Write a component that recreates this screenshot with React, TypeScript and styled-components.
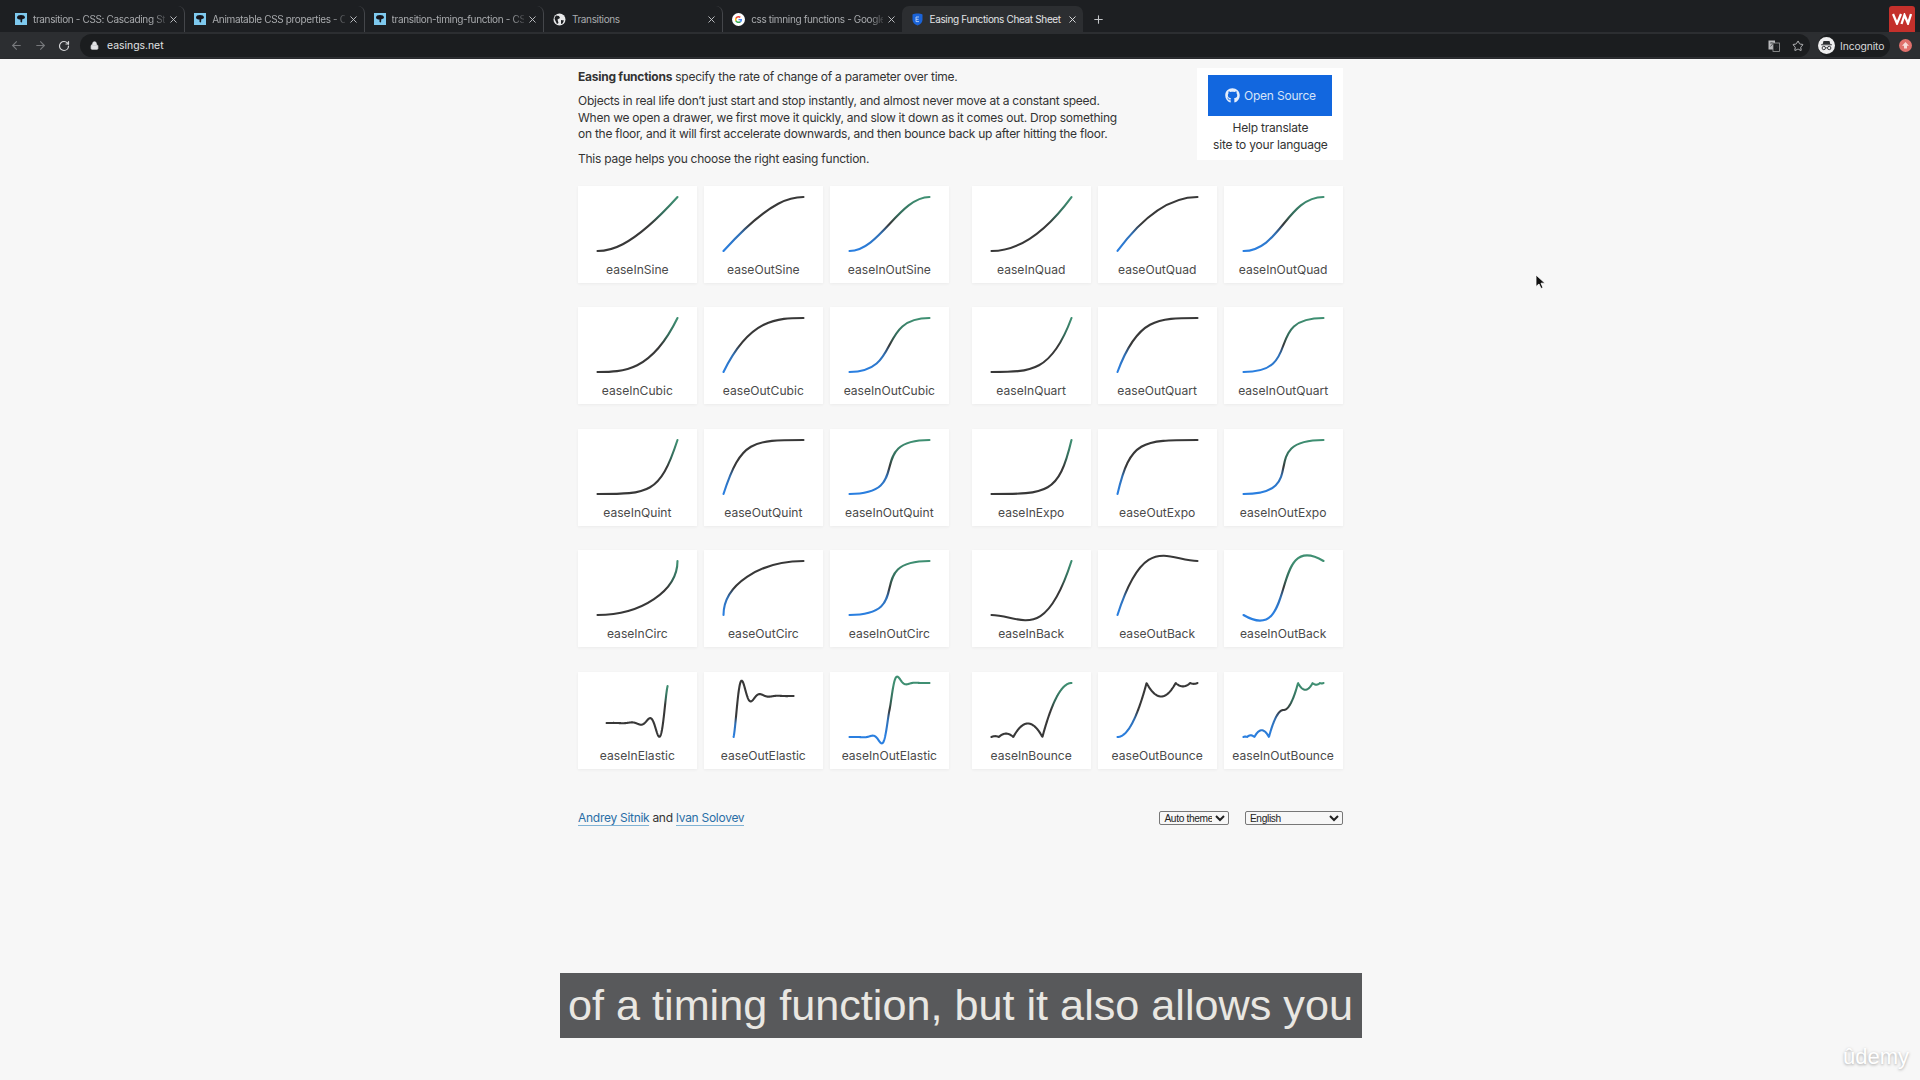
import styled, { createGlobalStyle } from 'styled-components';
import { ArrowLeft, ArrowRight, RotateCw, Lock, Star, Plus, X } from 'lucide-react';
import { FaGithub } from 'react-icons/fa';

const GlobalStyle = createGlobalStyle`
  html, body { margin: 0; padding: 0; height: 100%; background: #f7f7f7; }
  #root { height: 100%; }
  * { box-sizing: border-box; }
`;

const Screen = styled.div`
  position: relative;
  width: 1920px;
  height: 1080px;
  overflow: hidden;
  display: flex;
  flex-direction: column;
  font-family: Inter, 'Liberation Sans', sans-serif;
  background: #f7f7f7;
`;

const TabStrip = styled.div`
  height: 32px;
  flex-shrink: 0;
  display: flex;
  align-items: flex-end;
  padding-left: 6px;
  background: #1d1f22;
`;

const Tab = styled.div<{ $active?: boolean; $last?: boolean }>`
  width: ${(p) => (p.$active ? '181px' : '179.3px')};
  height: 26px;
  display: flex;
  align-items: center;
  gap: 6px;
  padding: 0 5px 0 ${(p) => (p.$active ? '10px' : '9px')};
  font-size: 10px;
  letter-spacing: -0.35px;
  white-space: nowrap;
  border-radius: 7px 7px 0 0;
  color: ${(p) => (p.$active ? '#e3e4e6' : '#a9abae')};
  background: ${(p) => (p.$active ? '#2c2e31' : 'transparent')};
  border-right: ${(p) => (p.$active || p.$last ? 'none' : '1px solid #44464a')};
  background-clip: padding-box;
  & > svg {
    flex-shrink: 0;
  }
`;

const TabTitle = styled.span<{ $fade?: boolean }>`
  flex: 1;
  min-width: 0;
  margin-right: -3px;
  ${(p) =>
    p.$fade
      ? `-webkit-mask-image: linear-gradient(90deg, #000 90%, rgba(0,0,0,0.25));
         mask-image: linear-gradient(90deg, #000 90%, rgba(0,0,0,0.25));`
      : ''}
`;

const NewTab = styled.div`
  display: flex;
  align-items: center;
  height: 26px;
  margin-left: 9px;
  color: #c4c6c9;
`;

const Brand = styled.div`
  margin-left: auto;
  margin-right: 5px;
  width: 26px;
  height: 26px;
  align-self: flex-end;
  border-radius: 3px 3px 0 0;
  background: #c4302b;
  display: flex;
  align-items: center;
  justify-content: center;
`;

const Toolbar = styled.div`
  height: 27px;
  flex-shrink: 0;
  display: flex;
  align-items: center;
  padding: 1px 0 0 4px;
  background: #2c2e31;
  border-bottom: 1px solid #2a2b2e;
`;

const NavButton = styled.div<{ $dim?: boolean }>`
  width: 24px;
  display: flex;
  justify-content: center;
  color: ${(p) => (p.$dim ? '#77797c' : '#d6d7d9')};
`;

const Omnibox = styled.div`
  margin-left: 4px;
  width: 1730px;
  height: 23px;
  border-radius: 12px;
  display: flex;
  align-items: center;
  padding-left: 10px;
  background: #1b1d1f;
  color: #e2e3e5;
  font-size: 10.4px;
`;

const Address = styled.span`
  margin-left: 8px;
  flex: 1;
`;

const OmniIcon = styled.div`
  display: flex;
  width: 24px;
  justify-content: center;
  color: #b9babc;
`;

const Profile = styled.div`
  margin-left: 8px;
  width: 72px;
  height: 23px;
  border-radius: 12px;
  display: flex;
  align-items: center;
  gap: 5px;
  background: #1b1d1f;
  color: #d8d9db;
  font-size: 10.3px;
  letter-spacing: -0.1px;
`;

const ExtensionDot = styled.div`
  margin-left: 9px;
  display: flex;
`;

const Main = styled.main`
  width: 765.4px;
  margin-left: 578px;
  flex: 1;
  display: flex;
  flex-direction: column;
`;

const Intro = styled.section`
  display: flex;
  justify-content: space-between;
  align-items: flex-start;
  padding-top: 8.5px;
`;

const IntroText = styled.div`
  font-size: 12px;
  letter-spacing: -0.25px;
  line-height: 16.5px;
  color: #333;
  padding-top: 1px;
`;

const Paragraph = styled.p`
  margin: 0 0 8.3px;
  white-space: nowrap;
`;

const SourceCard = styled.aside`
  width: 146px;
  height: 92px;
  padding-top: 7.5px;
  background: #fff;
  display: flex;
  flex-direction: column;
  align-items: center;
  font-size: 12px;
  letter-spacing: -0.2px;
  line-height: 16.5px;
  color: #333;
  text-align: center;
`;

const SourceButton = styled.a`
  width: 124px;
  height: 40.5px;
  margin-bottom: 4.5px;
  padding-top: 1px;
  background: #1267df;
  color: #d5e3f8;
  display: flex;
  align-items: center;
  justify-content: center;
  gap: 4px;
  font-size: 12px;
`;

const Grid = styled.section`
  margin-top: 10px;
  display: grid;
  grid-template-columns: repeat(3, 118.7px) 8.6px repeat(3, 118.7px);
  column-gap: 7.3px;
  row-gap: 24.5px;
`;

const Card = styled.div`
  height: 97px;
  background: #fff;
  box-shadow: 0 1px 3px rgba(0, 0, 0, 0.05);
  display: flex;
  flex-direction: column;
  align-items: center;
  &:nth-child(6n + 4) {
    grid-column: 5;
  }
`;

const CurveBox = styled.svg`
  display: block;
  flex-shrink: 0;
  width: 100%;
  height: 76px;
`;

const CardLabel = styled.div`
  font-size: 12.1px;
  line-height: 16px;
  color: #4a4a4a;
`;

const Footer = styled.footer`
  margin-top: 41px;
  display: flex;
  align-items: baseline;
  font-size: 12px;
  letter-spacing: -0.28px;
  color: #333;
`;

const Author = styled.a`
  color: #2a6ea6;
  border-bottom: 1px solid #7fb2d4;
  line-height: 14px;
`;

const Joiner = styled.span`
  margin: 0 3px;
`;

const Picker = styled.select<{ $w: number }>`
  align-self: center;
  width: ${(p) => p.$w}px;
  height: 14.5px;
  padding: 0;
  font-family: 'Liberation Sans', sans-serif;
  font-size: 10.2px;
  letter-spacing: -0.35px;
  color: #222;
  background: #f7f7f7;
  border: 1px solid #777;
  border-radius: 2px;
  margin-left: 15.5px;
  &:first-of-type {
    margin-left: auto;
  }
`;

const Caption = styled.div`
  position: absolute;
  left: 559.5px;
  top: 973px;
  width: 802px;
  height: 65px;
  display: flex;
  align-items: center;
  justify-content: center;
  background: #58595b;
  color: #e9e7e2;
  font-family: 'Liberation Sans', sans-serif;
  font-size: 43.2px;
  white-space: nowrap;
`;

const Watermark = styled.div`
  position: absolute;
  left: 1843px;
  top: 1044px;
  color: #fff;
  font-family: 'Liberation Sans', sans-serif;
  font-size: 22px;
  text-shadow: 0 1px 3px rgba(0, 0, 0, 0.35);
`;

const Pointer = styled.svg`
  position: absolute;
  left: 1535px;
  top: 274px;
`;

// the site draws most previews straight from their cubic-bezier values
const BEZIERS: Record<string, [number, number, number, number]> = {
  easeInSine: [0.12, 0, 0.39, 0],
  easeOutSine: [0.61, 1, 0.88, 1],
  easeInOutSine: [0.37, 0, 0.63, 1],
  easeInQuad: [0.11, 0, 0.5, 0],
  easeOutQuad: [0.5, 1, 0.89, 1],
  easeInOutQuad: [0.45, 0, 0.55, 1],
  easeInCubic: [0.32, 0, 0.67, 0],
  easeOutCubic: [0.33, 1, 0.68, 1],
  easeInOutCubic: [0.65, 0, 0.35, 1],
  easeInQuart: [0.5, 0, 0.75, 0],
  easeOutQuart: [0.25, 1, 0.5, 1],
  easeInOutQuart: [0.76, 0, 0.24, 1],
  easeInQuint: [0.64, 0, 0.78, 0],
  easeOutQuint: [0.22, 1, 0.36, 1],
  easeInOutQuint: [0.83, 0, 0.17, 1],
  easeInExpo: [0.7, 0, 0.84, 0],
  easeOutExpo: [0.16, 1, 0.3, 1],
  easeInOutExpo: [0.87, 0, 0.13, 1],
  easeInCirc: [0.55, 0, 1, 0.45],
  easeOutCirc: [0, 0.55, 0.45, 1],
  easeInOutCirc: [0.85, 0, 0.15, 1],
  easeInBack: [0.36, 0, 0.66, -0.56],
  easeOutBack: [0.34, 1.56, 0.64, 1],
  easeInOutBack: [0.68, -0.6, 0.32, 1.6],
};

type Ease = (x: number) => number;
const c4 = (2 * Math.PI) / 3;
const c5 = (2 * Math.PI) / 4.5;

const outBounce: Ease = (x) => {
  const n = 7.5625;
  const d = 2.75;
  if (x < 1 / d) return n * x * x;
  if (x < 2 / d) return n * (x -= 1.5 / d) * x + 0.75;
  if (x < 2.5 / d) return n * (x -= 2.25 / d) * x + 0.9375;
  return n * (x -= 2.625 / d) * x + 0.984375;
};

const SAMPLED: Record<string, Ease> = {
  easeInElastic: (x) =>
    x === 0 ? 0 : x === 1 ? 1 : -Math.pow(2, 10 * x - 10) * Math.sin((x * 10 - 10.75) * c4),
  easeOutElastic: (x) =>
    x === 0 ? 0 : x === 1 ? 1 : Math.pow(2, -10 * x) * Math.sin((x * 10 - 0.75) * c4) + 1,
  easeInOutElastic: (x) =>
    x === 0
      ? 0
      : x === 1
        ? 1
        : x < 0.5
          ? -(Math.pow(2, 20 * x - 10) * Math.sin((20 * x - 11.125) * c5)) / 2
          : (Math.pow(2, -20 * x + 10) * Math.sin((20 * x - 11.125) * c5)) / 2 + 1,
  easeInBounce: (x) => 1 - outBounce(1 - x),
  easeOutBounce: outBounce,
  easeInOutBounce: (x) =>
    x < 0.5 ? (1 - outBounce(1 - 2 * x)) / 2 : (1 + outBounce(2 * x - 1)) / 2,
};

const NAMES = [...Object.keys(BEZIERS), ...Object.keys(SAMPLED)];

// elastic previews are drawn smaller on the site
const BOXES: Record<string, { x0: number; x1: number; y0: number; y1: number }> = {
  easeInElastic: { x0: 28.6, x1: 89.6, y0: 51, y1: 14 },
  easeOutElastic: { x0: 29.6, x1: 89.6, y0: 65, y1: 24 },
};
const DEFAULT_BOX = { x0: 19.5, x1: 99.5, y0: 65, y1: 11 };

function curvePath(name: string) {
  const box = BOXES[name] ?? DEFAULT_BOX;
  const px = (t: number) => (box.x0 + t * (box.x1 - box.x0)).toFixed(2);
  const py = (v: number) => (box.y0 + v * (box.y1 - box.y0)).toFixed(2);
  const bez = BEZIERS[name];
  if (bez) {
    const [a, b, c, d] = bez;
    return { d: `M${px(0)} ${py(0)}C${px(a)} ${py(b)} ${px(c)} ${py(d)} ${px(1)} ${py(1)}`, box };
  }
  const ease = SAMPLED[name];
  const pts: string[] = [];
  for (let i = 0; i <= 240; i++) {
    const t = i / 240;
    pts.push(`${px(t)} ${py(ease(t))}`);
  }
  return { d: `M${pts.join('L')}`, box };
}

function Curve({ name }: { name: string }) {
  const { d, box } = curvePath(name);
  const id = `grad-${name}`;
  const both = name.startsWith('easeInOut');
  const blue = both || name.startsWith('easeOut');
  const green = both || !blue;
  return (
    <CurveBox viewBox="0 0 118.7 76">
      <defs>
        <linearGradient id={id} gradientUnits="userSpaceOnUse" x1="0" y1={box.y0} x2="0" y2={box.y1}>
          <stop offset="0.02" stopColor={blue ? '#2a7fe0' : '#383838'} />
          <stop offset="0.32" stopColor={blue ? '#2f6fb5' : '#383838'} />
          <stop offset="0.5" stopColor="#383838" />
          <stop offset="0.68" stopColor={green ? '#336a5a' : '#383838'} />
          <stop offset="0.98" stopColor={green ? '#3f8f72' : '#383838'} />
        </linearGradient>
      </defs>
      <path d={d} fill="none" stroke={`url(#${id})`} strokeWidth="2.1" strokeLinecap="round" strokeLinejoin="round" />
    </CurveBox>
  );
}

function MdnIcon() {
  return (
    <svg width="12" height="12" viewBox="0 0 12 12">
      <rect width="12" height="12" fill="#7ec9ee" />
      <path d="M2 4.500C2 2.800 3.800 2 6 2s4 .8 4 2.500C10 6 8 6 7.300 6.300L7 9.500 5.500 9 5.500 6.500C3.500 6.500 2 6 2 4.500z" fill="#15141a" />
    </svg>
  );
}

function GlobeIcon() {
  return (
    <svg width="13" height="13" viewBox="0 0 13 13">
      <circle cx="6.500" cy="6.500" r="6" fill="#e8e9ea" />
      <path d="M3 2.500l3 .5 1 2-2.500 1.500L5.500 10 4 11 2 7 1.500 5zM8 7l3 .5-1.500 3L8 11z" fill="#1d1f22" />
    </svg>
  );
}

function GoogleIcon() {
  return (
    <svg width="13" height="13" viewBox="0 0 48 48">
      <circle cx="24" cy="24" r="24" fill="#fff" />
      <path fill="#ea4335" d="M24 11c3.500 0 6.400 1.200 8.700 3.300l-4 4c-1.300-1.100-2.900-1.800-4.700-1.800-3.300 0-6.100 2.200-7.100 5.200l-4.700-3.600C14.300 13.900 18.800 11 24 11z" />
      <path fill="#4285f4" d="M37 24.500c0-1-.1-1.800-.3-2.600H24v5h7.300c-.3 1.700-1.300 3.100-2.800 4l4.400 3.400c2.600-2.400 4.100-5.900 4.100-9.800z" />
      <path fill="#fbbc05" d="M16.900 26.800c-.3-.9-.4-1.800-.4-2.800s.1-1.900.4-2.800l-4.700-3.600C11.400 19.200 11 21.500 11 24s.4 4.800 1.200 6.400z" />
      <path fill="#34a853" d="M24 37c3.500 0 6.500-1.200 8.900-3.200l-4.400-3.400c-1.200.8-2.700 1.300-4.500 1.300-3.300 0-6.100-2.200-7.100-5.200l-4.700 3.600C14.300 34.100 18.800 37 24 37z" />
    </svg>
  );
}

function EasingIcon() {
  return (
    <svg width="11" height="13" viewBox="0 0 11 13">
      <path d="M.5 1.500C2 .8 3.500.5 5.500.5s3.500.3 5 1v5c0 3-2 5-5 6-3-1-5-3-5-6z" fill="#1a63d8" />
      <path d="M4 4h3M4 6.300h2.600M4 8.600h3M4 4v4.600" stroke="#cfe0fa" strokeWidth="0.8" fill="none" />
    </svg>
  );
}

function TranslateIcon() {
  return (
    <svg width="12" height="12" viewBox="0 0 12 12">
      <rect x="0.500" y="0.500" width="6.500" height="9" fill="#b9babc" />
      <rect x="5" y="3" width="6.500" height="8.500" fill="#1b1d1f" stroke="#9c9d9f" strokeWidth="0.8" />
      <path d="M2 3h3.500M3.700 2.500v.5M2.500 6.500L5 3.500M7 6h3M8.500 5.500v.5M7 9.500c1.800-.5 2.700-1.700 3-3.500" stroke="#2c2e31" strokeWidth="0.7" fill="none" />
    </svg>
  );
}

function IncognitoIcon() {
  return (
    <svg width="17" height="17" viewBox="0 0 17 17">
      <circle cx="8.500" cy="8.500" r="8.500" fill="#eeeeef" />
      <path d="M5.500 4h6l.8 3H4.700zM3.200 7.300h10.600v.9H3.200z" fill="#2c2e31" />
      <circle cx="5.800" cy="11" r="1.700" fill="none" stroke="#2c2e31" strokeWidth="0.9" />
      <circle cx="11.200" cy="11" r="1.700" fill="none" stroke="#2c2e31" strokeWidth="0.9" />
      <path d="M7.500 10.800h2" stroke="#2c2e31" strokeWidth="0.8" />
    </svg>
  );
}

const TABS = [
  { title: 'transition - CSS: Cascading St', icon: <MdnIcon />, fade: true },
  { title: 'Animatable CSS properties - C', icon: <MdnIcon />, fade: true },
  { title: 'transition-timing-function - CS', icon: <MdnIcon />, fade: true },
  { title: 'Transitions', icon: <GlobeIcon />, fade: false },
  { title: 'css timning functions - Google', icon: <GoogleIcon />, fade: true },
];

export default function App() {
  return (
    <Screen>
      <GlobalStyle />
      <TabStrip>
        {TABS.map((t, i) => (
          <Tab key={t.title} $last={i === 4}>
            {t.icon}
            <TabTitle $fade={t.fade}>{t.title}</TabTitle>
            <X size={11} color="#c4c6c9" strokeWidth={2} />
          </Tab>
        ))}
        <Tab $active>
          <EasingIcon />
          <TabTitle>Easing Functions Cheat Sheet</TabTitle>
          <X size={11} color="#e3e4e6" strokeWidth={2} />
        </Tab>
        <NewTab>
          <Plus size={13} strokeWidth={2} />
        </NewTab>
        <Brand>
          <svg width="20" height="12" viewBox="0 0 20 12">
            <path d="M1 1l4 9.500L9 1M9.500 11l3-9 3.500 8.500L19 1" fill="none" stroke="#fff" strokeWidth="2.300" />
          </svg>
        </Brand>
      </TabStrip>
      <Toolbar>
        <NavButton $dim><ArrowLeft size={13} /></NavButton>
        <NavButton $dim><ArrowRight size={13} /></NavButton>
        <NavButton><RotateCw size={12} strokeWidth={2.4} /></NavButton>
        <Omnibox>
          <Lock size={9} fill="#e2e3e5" color="#e2e3e5" />
          <Address>easings.net</Address>
          <OmniIcon><TranslateIcon /></OmniIcon>
          <OmniIcon><Star size={12} /></OmniIcon>
        </Omnibox>
        <Profile>
          <IncognitoIcon />
          <span>Incognito</span>
        </Profile>
        <ExtensionDot>
          <svg width="13" height="13" viewBox="0 0 13 13">
            <circle cx="6.500" cy="6.500" r="6.500" fill="#e0706c" />
            <path d="M6.500 3L10 6.800H8v2.700H5V6.800H3z" fill="#f7dcda" />
          </svg>
        </ExtensionDot>
      </Toolbar>
      <Main>
        <Intro>
          <IntroText>
            <Paragraph>
              <b>Easing functions</b> specify the rate of change of a parameter over time.
            </Paragraph>
            <Paragraph>
              Objects in real life don’t just start and stop instantly, and almost never move at a constant speed.
              <br />
              When we open a drawer, we first move it quickly, and slow it down as it comes out. Drop something
              <br />
              on the floor, and it will first accelerate downwards, and then bounce back up after hitting the floor.
            </Paragraph>
            <Paragraph>This page helps you choose the right easing function.</Paragraph>
          </IntroText>
          <SourceCard>
            <SourceButton>
              <FaGithub size={15} color="#e6eefb" />
              Open Source
            </SourceButton>
            Help translate
            <br />
            site to your language
          </SourceCard>
        </Intro>
        <Grid>
          {NAMES.map((name) => (
            <Card key={name}>
              <Curve name={name} />
              <CardLabel>{name}</CardLabel>
            </Card>
          ))}
        </Grid>
        <Footer>
          <Author>Andrey Sitnik</Author>
          <Joiner>and</Joiner>
          <Author>Ivan Solovev</Author>
          <Picker $w={70} defaultValue="auto">
            <option value="auto">Auto theme</option>
          </Picker>
          <Picker $w={98.5} defaultValue="en">
            <option value="en">English</option>
          </Picker>
        </Footer>
      </Main>
      <Caption>of a timing function, but it also allows you</Caption>
      <Watermark>ûdemy</Watermark>
      <Pointer width="12" height="16" viewBox="0 0 12 16">
        <path d="M1 1v11.500l3-2.500 2 4.500 2-.8-2-4.500h4z" fill="#111" stroke="#fff" strokeWidth="0.8" />
      </Pointer>
    </Screen>
  );
}
